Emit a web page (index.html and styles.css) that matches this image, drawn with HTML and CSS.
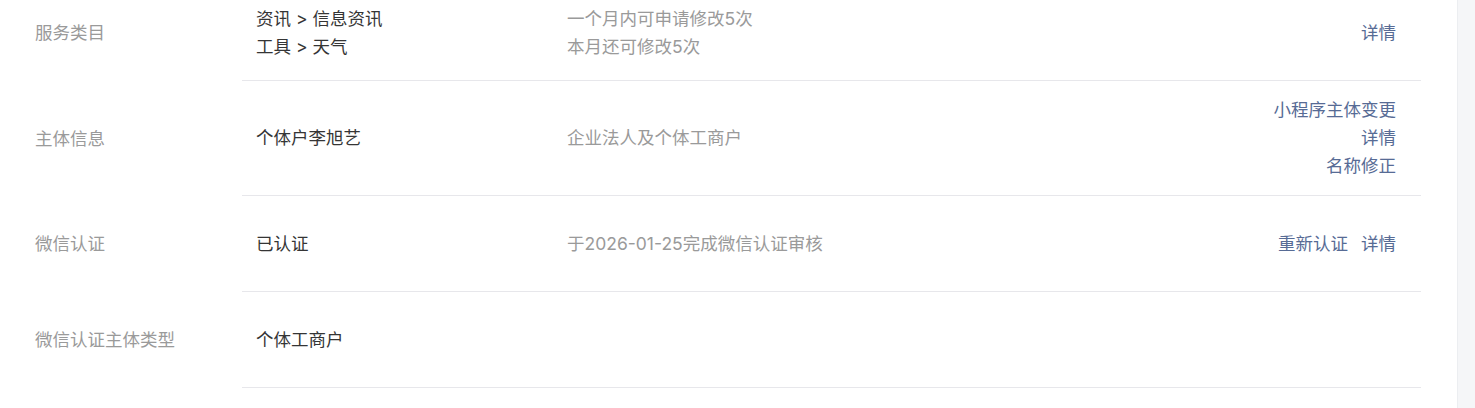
FILE: index.html
```html
<!DOCTYPE html>
<html lang="zh-CN">
<head>
<meta charset="utf-8">
<title>基本设置</title>
<link rel="stylesheet" href="styles.css">
</head>
<body>
<div class="page">
  <div class="panel">
    <div class="table">
      <div class="row">
        <div class="label">服务类目</div>
        <div class="body">
          <div class="value">
            <div>资讯 &gt; 信息资讯</div>
            <div>工具 &gt; 天气</div>
          </div>
          <div class="desc">
            <div>一个月内可申请修改5次</div>
            <div>本月还可修改5次</div>
          </div>
          <div class="actions">
            <a class="link">详情</a>
          </div>
        </div>
      </div>
      <div class="row">
        <div class="label">主体信息</div>
        <div class="body">
          <div class="value">个体户李旭艺</div>
          <div class="desc">企业法人及个体工商户</div>
          <div class="actions stack">
            <a class="link">小程序主体变更</a>
            <a class="link">详情</a>
            <a class="link">名称修正</a>
          </div>
        </div>
      </div>
      <div class="row">
        <div class="label">微信认证</div>
        <div class="body">
          <div class="value">已认证</div>
          <div class="desc">于2026-01-25完成微信认证审核</div>
          <div class="actions inline">
            <a class="link">重新认证</a>
            <a class="link">详情</a>
          </div>
        </div>
      </div>
      <div class="row">
        <div class="label">微信认证主体类型</div>
        <div class="body">
          <div class="value">个体工商户</div>
          <div class="desc"></div>
          <div class="actions"></div>
        </div>
      </div>
    </div>
  </div>
</div>
</body>
</html>
```

FILE: styles.css
```css
html, body {
  margin: 0;
  padding: 0;
  background: #f5f6f8;
}

body {
  font-family: "Inter", "Noto Sans CJK SC", "Noto Sans", sans-serif;
  font-size: 17.5px;
  line-height: 28px;
  color: #353535;
  overflow: hidden;
  height: 408px;
}

.page {
  display: flex;
}

.panel {
  flex: 0 0 1458px;
  background: #ffffff;
  border-right: 1px solid #eceef1;
  box-sizing: border-box;
  height: 408px;
}

.table {
  margin-top: -15px;
  margin-right: 36px;
}

.row {
  display: flex;
  align-items: stretch;
}

.label {
  flex: 0 0 242px;
  box-sizing: border-box;
  padding-left: 35px;
  display: flex;
  align-items: center;
  color: #9a9a9a;
}

.body {
  flex: 1;
  display: flex;
  align-items: center;
  box-sizing: border-box;
  min-height: 96px;
  padding: 15px 25px 15px 14px;
  border-bottom: 1px solid #e7e7eb;
}

.value {
  flex: 0 0 311px;
  color: #353535;
}

.desc {
  flex: 1;
  color: #9a9a9a;
}

.actions {
  display: flex;
  justify-content: flex-end;
  text-align: right;
}

.actions.stack {
  flex-direction: column;
  align-items: flex-end;
}

.actions.inline {
  gap: 13px;
}

.link {
  color: #576b95;
  text-decoration: none;
  cursor: pointer;
}
```
